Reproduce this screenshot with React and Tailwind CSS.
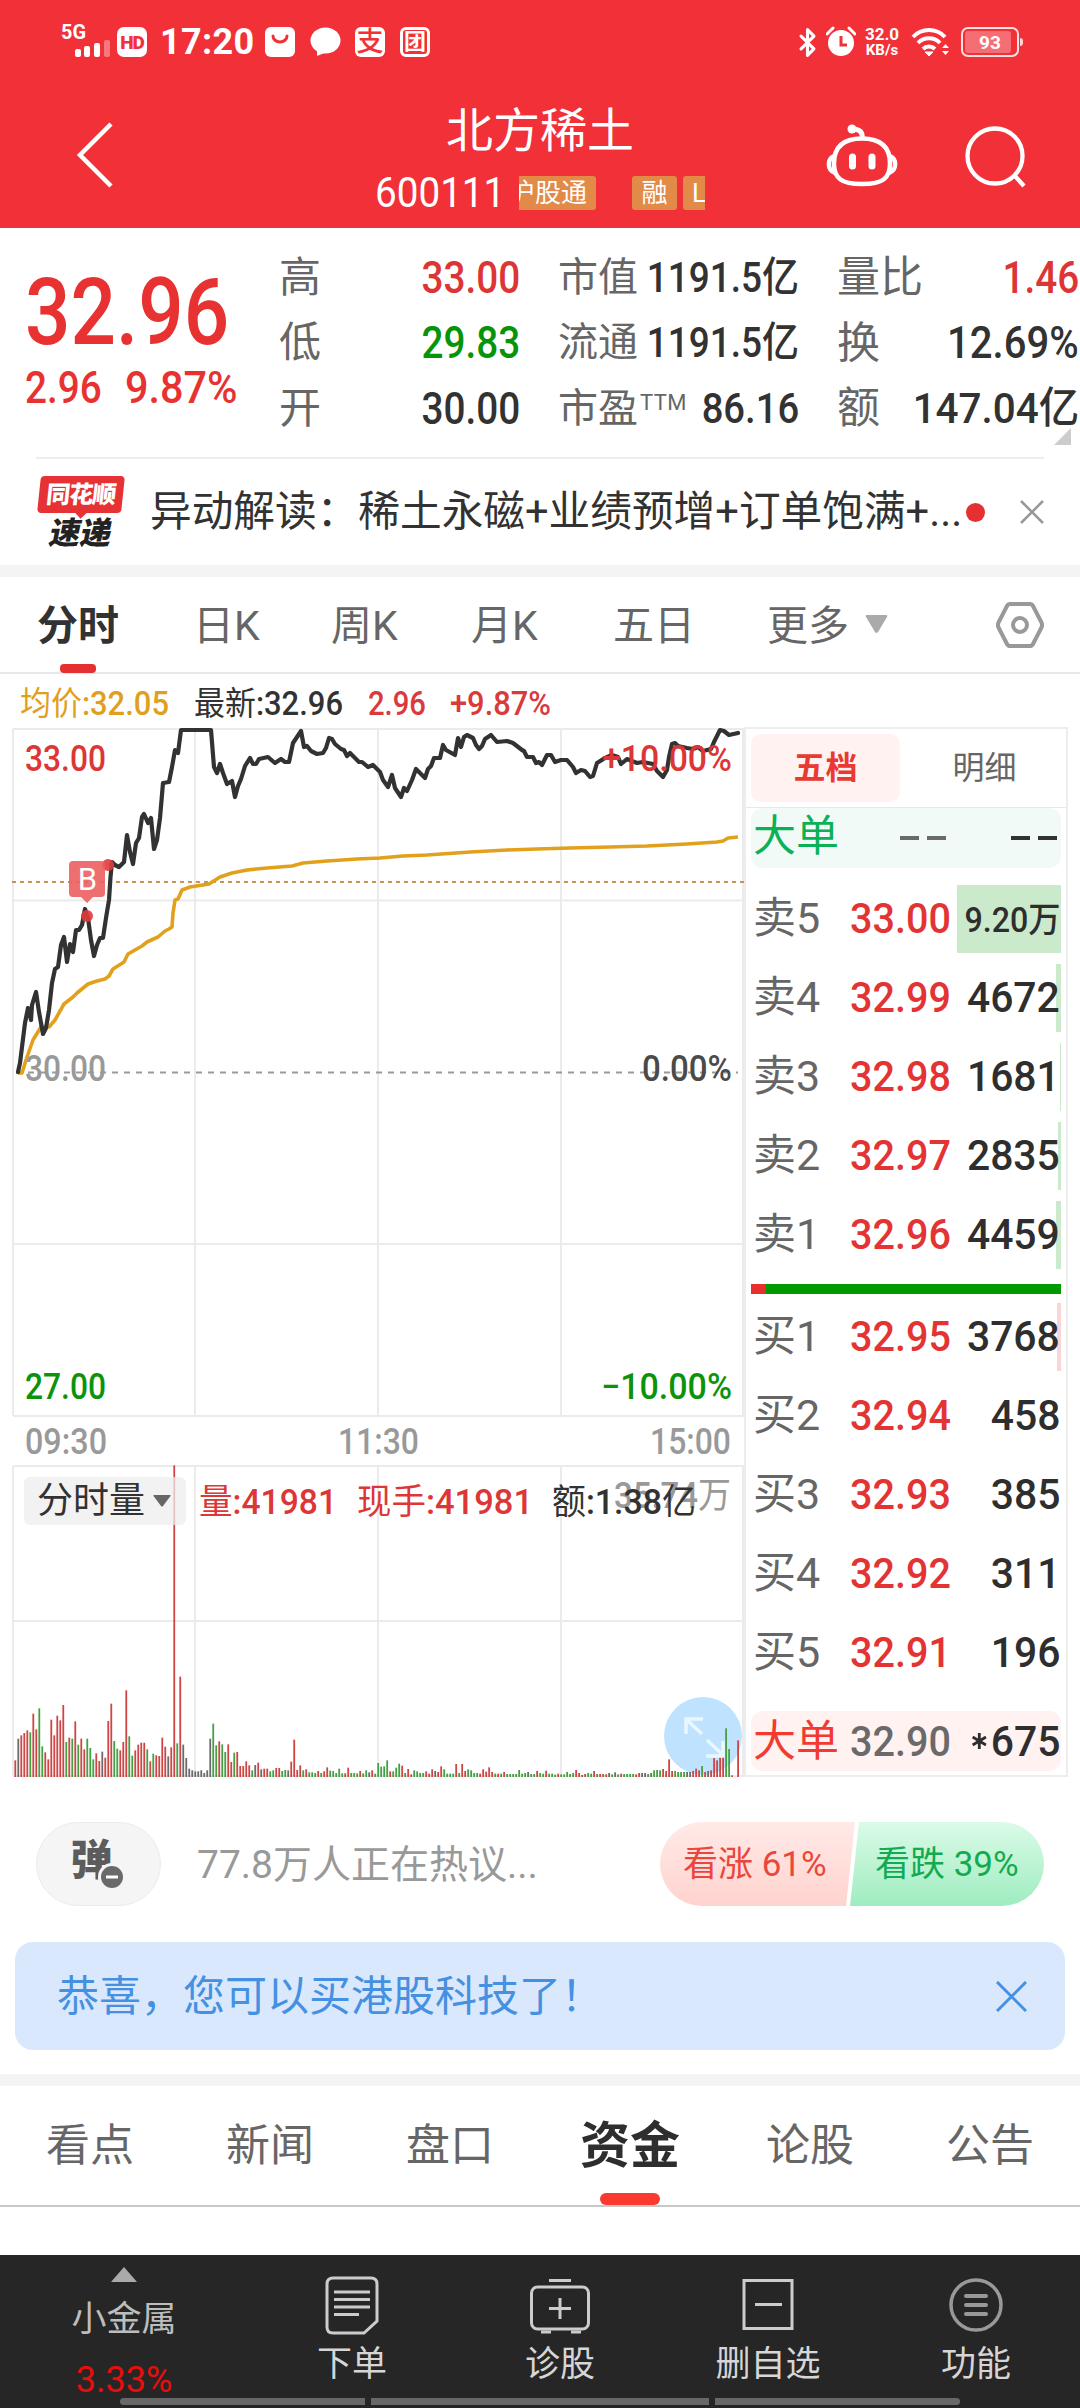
import React from 'react';
import { Bluetooth } from 'lucide-react';

const PRICE_LINE =
  '18,1072 20,1063 22,1047 25,1023 28,1008 31,1020 32,1005 36,992 39,1012 43,1034 46,1028 49,1010 52,983 55,969 58,967 61,945 64,937 67,962 70,944 73,952 76,930 79,930 82,925 85,909 88,918 91,940 94,956 97,945 100,938 103,938 106,918 109,900 110.5,877 112,862 115,865 119,867 124,862 127,835 130,852 133,864 136,843 139,838 142,817 144,814 148,823 151,818 154,849 157,840 160,818 163,783 169,782 172,767 175,750 178,753 181,730 211,730 214,767 217,773 220,764 223,773 227,784 232,781 235,797 238,786 241,779 245,766 250,758 253,764 256,764 259,759 268,757 275,763 281,759 285,762 289,762 293,743 301,731 304,747 307,746 311,751 317,754 323,753 326,748 329,738 332,739 335,744 341,749 344,750 347,756 350,753 359,762 362,762 368,767 373,765 380,772 383,780 388,787 392,775 395,788 401,797 404,788 407,791 412,780 416,769 420,773 425,778 428,769 431,766 434,758 440,758 443,745 446,750 455,755 458,738 461,747 464,737 467,735 473,738 476,745 479,749 482,746 485,739 491,735 497,742 507,741 513,743 522,750 524,751 527,757 533,757 536,763 539,762 542,765 547,755 551,755 555,762 561,760 567,760 573,767 576,773 581,770 585,771 590,777 593,776 597,763 605,758 612,755 618,757 621,764 627,759 637,763 643,762 653,764 657,771 663,777 667,770 669,757 672,744 675,743 678,746 687,748 693,749 698,747 703,751 711,749 714,742 720,730 724,731 729,735 738,733';

const AVG_LINE =
  '18,1073 22,1073 26,1060 33,1040 41,1027 49,1027 55,1020 64,1004 73,997 77,993 88,984 97,981 105,979 109,976 113,969 124,962 128,954 142,946 147,942 158,937 165,931 169,929 172,927 173,913 175,900 178,899 182,890 190,887 209,884 220,877 232,873 247,870 267,868 292,866 303,863 327,861 357,859 380,858 403,856 427,855 470,852 507,850 537,849 570,848 610,847 647,846 687,844 717,842 723,841 728,838 738,837';

// one entry per minute: r = up, g = down, k = flat, number = bar height in thirds of a pixel
const VOLUME =
  'r50 k115 r125 r132 r140 g134 r190 r143 g206 g92 r74 r53 r172 r125 r184 r170 r216 g105 r118 g115 r167 g97 r115 r83 g115 g87 g53 r71 r48 k76 r58 r168 r220 g108 g85 r80 r105 r260 g122 g64 r80 r97 r103 r103 g83 r47 g70 r65 r63 r118 r91 k62 r89 r935 g101 r301 k97 k57 k25 k20 k17 k17 k20 k12 k20 k115 g160 g95 r107 g98 g75 r98 r45 g73 r75 r33 r33 r47 r35 g20 k36 r43 k23 r25 r25 g17 g20 r27 r27 g18 g21 k20 r46 r112 r21 r35 g20 r23 g14 g14 g12 r18 g12 r17 r29 g19 g18 g12 g25 g11 r11 r28 g12 g12 g11 r18 g11 g20 k14 r20 g10 g42 g31 g32 g50 r17 g17 g28 g40 r34 g12 r24 r8 g20 g17 g12 g12 r17 r10 r23 k18 r15 r32 g23 g10 g10 g10 r39 g12 r39 r18 g23 g20 g12 g12 r10 r23 r16 r29 r15 g10 r10 g10 r15 g9 g9 g9 g9 g21 g10 g12 k15 g9 g9 r18 g12 g10 r19 g10 g10 g7 r10 g8 g8 g15 g9 g12 r21 r12 k6 r9 g12 g10 r18 g9 r9 r9 r8 k12 g8 k14 g8 r10 g9 g9 g9 g9 r8 r12 k12 k12 g9 k12 g20 g21 g20 r24 r18 r53 r18 g18 g15 g15 g15 k15 k15 r18 r25 r20 g33 r15 k18 r20 r57 r50 r60 r62 g146 g84 r5 k0 r110';

const BAR_COLORS = { r: '#cf4545', g: '#45a045', k: '#6b6b6b' };

const BARS = VOLUME.split(' ').map((item, i, all) => ({
  x: 14.4 + (i * 722.8) / (all.length - 1),
  h: Number(item.slice(1)) / 3,
  fill: BAR_COLORS[item[0]],
}));

const SELLS = [
  { label: '卖5', price: '33.00', qty: '9.20万', bar: 104 },
  { label: '卖4', price: '32.99', qty: '4672', bar: 5 },
  { label: '卖3', price: '32.98', qty: '1681', bar: 1 },
  { label: '卖2', price: '32.97', qty: '2835', bar: 3 },
  { label: '卖1', price: '32.96', qty: '4459', bar: 5 },
];

const BUYS = [
  { label: '买1', price: '32.95', qty: '3768', bar: 4 },
  { label: '买2', price: '32.94', qty: '458', bar: 0 },
  { label: '买3', price: '32.93', qty: '385', bar: 0 },
  { label: '买4', price: '32.92', qty: '311', bar: 0 },
  { label: '买5', price: '32.91', qty: '196', bar: 0 },
];

function StatusBar() {
  return (
    <div className="flex h-[84px] items-center pl-[61px] pr-[57px] text-white">
      <svg width="50" height="34" viewBox="0 0 50 34" fill="#fff" className="overflow-visible">
        <text x="0" y="14" fontSize="21" fontWeight="700" textLength="25" lengthAdjust="spacingAndGlyphs">5G</text>
        <rect x="14" y="24" width="6" height="8" rx="2" />
        <rect x="23" y="21" width="6" height="11" rx="2" />
        <rect x="33" y="18" width="6" height="14" rx="2" />
        <rect x="43" y="15" width="6" height="17" rx="2" opacity=".35" />
      </svg>
      <div className="ml-[6px] flex h-[30px] w-[30px] items-center justify-center rounded-[7px] bg-white text-[19px] font-black tracking-tighter text-[#f13038]">HD</div>
      <div className="ml-[13px] w-[93px] text-[36px] font-bold whitespace-nowrap tracking-[0.01em]">17:20</div>
      <svg className="ml-[12px]" width="30" height="30" viewBox="0 0 30 30">
        <rect width="30" height="30" rx="6" fill="#fff" />
        <path d="M8 9a7 6 0 0 0 14 0" fill="none" stroke="#f13038" strokeWidth="3" strokeLinecap="round" />
      </svg>
      <svg className="ml-[15px]" width="31" height="30" viewBox="0 0 31 30" fill="#fff">
        <ellipse cx="15.500" cy="13.500" rx="15" ry="13" />
        <path d="M7 22v7l10-4z" />
      </svg>
      <div className="ml-[14px] flex h-[30px] w-[30px] items-center justify-center rounded-[6px] bg-white text-[27px] font-medium text-[#f13038]">支</div>
      <div className="ml-[15px] flex h-[30px] w-[30px] items-center justify-center rounded-[6px] border-[3px] border-white text-[22px] font-bold">团</div>
      <div className="ml-auto flex items-center">
        <Bluetooth size={31} strokeWidth={2.4} className="mr-[3px]" />
        <svg width="30" height="32" viewBox="0 0 30 32">
          <circle cx="15" cy="17" r="13" fill="#fff" />
          <path d="M1 8l6-6M29 8l-6-6" stroke="#fff" strokeWidth="3" strokeLinecap="round" />
          <path d="M15 10v9h6" fill="none" stroke="#f13038" strokeWidth="3" />
        </svg>
        <div className="ml-[7px] flex w-[38px] flex-col items-center text-[17px] leading-[16px] font-bold">
          <span>32.0</span>
          <span className="whitespace-nowrap text-[15px]">KB/s</span>
        </div>
        <svg className="ml-[10px]" width="39" height="32" viewBox="0 0 39 32" fill="none" stroke="#fff" strokeWidth="4">
          <path d="M2 11a22 22 0 0 1 32 0M7 17a15 15 0 0 1 22 0M12 23a8.500 8.500 0 0 1 12 0" />
          <path d="M14 26l4 4 4-4z" fill="#fff" strokeWidth="1" />
          <path d="M31 22l3.500-4 3.500 4zM31 25l3.500 4 3.500-4z" fill="#fff" stroke="none" />
        </svg>
        <div className="ml-[11px] flex h-[30px] w-[58px] rounded-[7px] border-[2.5px] border-white/85 p-[2px]">
          <div className="flex w-[46px] items-center justify-center rounded-[3px] bg-white/30 pl-[4px] text-[19px] font-bold">93</div>
        </div>
        <div className="ml-px h-[8px] w-[3px] rounded-r bg-white/80" />
      </div>
    </div>
  );
}

function Header() {
  return (
    <header className="h-[228px] bg-[#f13038] text-white">
      <StatusBar />
      <div className="flex h-[144px]">
        <svg className="mt-[38px] ml-[76px]" width="38" height="66" viewBox="0 0 38 66" fill="none" stroke="#fff" strokeWidth="4.500">
          <path d="M35 2L4 33l31 31" />
        </svg>
        <div className="ml-[256px] flex w-[340px] flex-col items-center">
          <h1 className="mt-[23px] text-[47px] leading-[47px]">北方稀土</h1>
          <div className="mt-[17px] ml-[5px] flex h-[44px] items-center self-start text-[26px]">
            <span className="block w-[136px]">
              <span className="inline-block origin-left scale-x-[.92] text-[42px]">600111</span>
            </span>
            <div className="ml-[8px] flex h-[34px] w-[186px] overflow-hidden">
              <div className="flex w-[77px] shrink-0 items-center justify-end overflow-hidden rounded-r-[3px] bg-[#e28a48] pr-[9px] whitespace-nowrap">沪股通</div>
              <div className="ml-[36px] flex w-[45px] shrink-0 items-center justify-center rounded-[3px] bg-[#e28a48]">融</div>
              <div className="ml-[6px] flex w-[40px] shrink-0 items-center rounded-[3px] bg-[#e28a48] pl-[9px]">L</div>
            </div>
          </div>
        </div>
        <div className="ml-auto flex">
          <svg className="mt-[39px] mr-[66px]" width="72" height="66" viewBox="0 0 72 66" fill="none" stroke="#fff" strokeWidth="4.500">
            <path d="M36 15.500c19 0 28 9 28 25C64 55 57 61 36 61S8 55 8 40.500c0-16 9-25 28-25z" />
            <path d="M8 33c-7 3-7 14 1 17M64 33c7 3 7 14-1 17" />
            <path d="M36 16c1-6-1-9-8-10" strokeWidth="5" />
            <circle cx="26" cy="6" r="4.500" fill="#fff" stroke="none" />
            <path d="M26.500 34v9M46 34v9" strokeWidth="7" strokeLinecap="round" />
          </svg>
          <svg className="mt-[42px] mr-[53px]" width="63" height="63" viewBox="0 0 63 63" fill="none" stroke="#fff" strokeWidth="4.300">
            <circle cx="31" cy="30" r="27.500" />
            <path d="M50 49l10 11" />
          </svg>
        </div>
      </div>
    </header>
  );
}

function Stat({ label, sup, value, color = 'text-[#323232]', size = 'text-[44px]', scale = 'scale-x-[.88]' }) {
  return (
    <div className="flex h-[65.500px] items-center justify-between whitespace-nowrap">
      <div className="flex items-center text-[#666]">
        {label}
        {sup && <span className="-mt-3 ml-[2px] text-[22px] tracking-[.02em]">{sup}</span>}
      </div>
      <div className="flex w-0 justify-end">
        <span className={`inline-block shrink-0 origin-right font-medium ${scale} ${size} ${color}`}>{value}</span>
      </div>
    </div>
  );
}

function Quote() {
  return (
    <section className="relative flex h-[229px] pt-[17px]">
      <div className="w-[279px] pl-[25px] font-medium whitespace-nowrap text-[#e83232]">
        <div className="mt-[22px] origin-left scale-x-[.87] text-[92px] leading-[92px]">32.96</div>
        <div className="mt-[6px] flex text-[45px] leading-[45px]">
          <span className="w-[100px] origin-left scale-x-[.86]">2.96</span>
          <span className="origin-left scale-x-[.92]">9.87%</span>
        </div>
      </div>
      <div className="w-[241px] text-[42px]">
        <Stat label="高" value="33.00" color="text-[#dd3535]" />
        <Stat label="低" value="29.83" color="text-[#089408]" />
        <Stat label="开" value="30.00" />
      </div>
      <div className="ml-[38px] w-[241px] text-[40px]">
        <Stat label="市值" value="1191.5亿" size="text-[42px]" scale="scale-x-[.88]" />
        <Stat label="流通" value="1191.5亿" size="text-[42px]" scale="scale-x-[.88]" />
        <Stat label="市盈" sup="TTM" value="86.16" size="text-[42px]" scale="scale-x-[.91]" />
      </div>
      <div className="ml-[38px] w-[242px] text-[43px]">
        <Stat label="量比" value="1.46" color="text-[#dd3535]" />
        <Stat label="换" value="12.69%" scale="scale-x-[.91]" />
        <Stat label="额" value="147.04亿" size="text-[43px]" scale="scale-x-[.94]" />
      </div>
      <svg className="absolute right-[9px] bottom-[12px]" width="17" height="17">
        <path d="M17 0v17H0z" fill="#ccc" />
      </svg>
    </section>
  );
}

function News() {
  return (
    <section className="h-[108px] px-9">
      <div className="flex h-full items-center border-t-2 border-[#eee]">
        <div className="flex w-[90px] flex-col items-center font-black">
          <div className="relative flex h-[37px] w-[84px] -skew-x-6 items-center justify-center rounded-[4px] bg-[#e63235] text-[24px] tracking-[-1px] text-white">
            同花顺
            <div className="absolute -bottom-[4px] left-[40px] h-[8px] w-[8px] rotate-45 bg-[#e63235]" />
          </div>
          <div className="mt-[5px] -skew-x-12 text-[31px] leading-[31px] text-[#222]">速递</div>
        </div>
        <div className="ml-[24px] origin-left scale-x-[.992] text-[42px] whitespace-nowrap text-[#323232]">异动解读：稀土永磁+业绩预增+订单饱满+...</div>
        <div className="absolute ml-[930px] h-[19px] w-[19px] rounded-full bg-[#e63030]" />
        <svg className="ml-auto shrink-0" width="24" height="24" stroke="#999" strokeWidth="2.500">
          <path d="M1 1l22 22M23 1L1 23" />
        </svg>
      </div>
    </section>
  );
}

function ChartTabs() {
  return (
    <nav className="flex h-[97px] items-center border-b-2 border-[#e8e8e8] text-[41px] whitespace-nowrap text-[#666]">
      <div className="relative ml-[37px] w-[156px] pt-[4px] font-bold text-[#323232]">
        分时
        <div className="absolute top-[62px] left-[23px] h-[9px] w-[36px] rounded-[4px] bg-[#e63030]" />
      </div>
      <div className="w-[138px] pt-[4px]">日K</div>
      <div className="w-[140px] pt-[4px]">周K</div>
      <div className="w-[142px] pt-[4px]">月K</div>
      <div className="w-[154px] pt-[4px]">五日</div>
      <div className="pt-[4px]">更多</div>
      <svg className="ml-[16px]" width="23" height="19">
        <path d="M2 0h19q2 0 1 2l-9 15q-1.500 2-3 0L1 2Q0 0 2 0z" fill="#aaa" />
      </svg>
      <svg className="mr-[36px] ml-auto" width="48" height="48" viewBox="0 0 48 48" fill="none" stroke="#999" strokeWidth="4">
        <path d="M14 3h20q2 0 3 2l8.500 16.500q1.200 2.500 0 5L37 43q-1 2-3 2H14q-2 0-3-2L2.500 26.500q-1.200-2.500 0-5L11 5q1-2 3-2z" />
        <circle cx="24" cy="24" r="7" />
      </svg>
    </nav>
  );
}

function Legend() {
  return (
    <div className="h-[53px]">
      <svg width="560" height="53" fontSize="33" fontWeight="500" fill="#da3a3a">
        <text x="20" y="41" fill="#dfa01d" textLength="149" lengthAdjust="spacingAndGlyphs"><tspan fontWeight="400">均价</tspan>:32.05</text>
        <text x="194" y="41" fill="#323232" textLength="149" lengthAdjust="spacingAndGlyphs"><tspan fontWeight="400">最新</tspan>:32.96</text>
        <text x="368" y="41" textLength="58" lengthAdjust="spacingAndGlyphs">2.96</text>
        <text x="450" y="41" textLength="101" lengthAdjust="spacingAndGlyphs">+9.87%</text>
      </svg>
    </div>
  );
}

function MinuteChart() {
  return (
    <div className="relative h-[1052px] w-[744px] shrink-0">
      <svg width="744" height="1052" viewBox="0 727 744 1052" className="block">
        <g stroke="#ebebeb" strokeWidth="2" fill="none">
          <path d="M13 729h731M13 1416h731M13 1466h731M13 1776h731M13 900.500h731M13 1244h731M13 1621h731" />
          <path d="M13 729v687M195 729v687M378 729v687M561 729v687M743 729v687" />
          <path d="M13 1466v310M195 1466v310M378 1466v310M561 1466v310M743 1466v310" />
        </g>
        <path d="M12 882h732" stroke="#cb9256" strokeWidth="2" strokeDasharray="4 4" />
        <path d="M16 1072.500h722" stroke="#999" strokeWidth="2" strokeDasharray="6 6" />
        <polyline points={AVG_LINE} fill="none" stroke="#e2a11c" strokeWidth="3.600" strokeLinejoin="round" />
        <polyline points={PRICE_LINE} fill="none" stroke="#323232" strokeWidth="4.200" strokeLinejoin="round" strokeLinecap="round" />
        <circle cx="87" cy="916" r="6" fill="#e03a3a" opacity=".9" />
        <circle cx="108" cy="865" r="6" fill="#e03a3a" opacity=".9" />
        <path d="M73 861h28q4 0 4 4v28q0 4-4 4h-8l-6 6-6-6h-8q-4 0-4-4v-28q0-4 4-4z" fill="#ec5f5f" opacity=".9" />
        <text x="87.500" y="890" fontSize="31" fill="#fff" textAnchor="middle">B</text>

        <g fontSize="36" fontWeight="500">
          <text x="25" y="771" fill="#dc3636" textLength="81" lengthAdjust="spacingAndGlyphs">33.00</text>
          <text x="25" y="1081" fill="#999" textLength="81" lengthAdjust="spacingAndGlyphs">30.00</text>
          <text x="25" y="1399" fill="#0b940b" textLength="81" lengthAdjust="spacingAndGlyphs">27.00</text>
          <text x="602" y="771" fill="#dc3636" textLength="130" lengthAdjust="spacingAndGlyphs">+10.00%</text>
          <text x="642" y="1081" fill="#4a4a4a" textLength="90" lengthAdjust="spacingAndGlyphs">0.00%</text>
          <text x="601" y="1399" fill="#0b940b" textLength="131" lengthAdjust="spacingAndGlyphs">−10.00%</text>
          <g fill="#999">
            <text x="25" y="1454" textLength="82" lengthAdjust="spacingAndGlyphs">09:30</text>
            <text x="338" y="1454" textLength="81" lengthAdjust="spacingAndGlyphs">11:30</text>
            <text x="650" y="1454" textLength="81" lengthAdjust="spacingAndGlyphs">15:00</text>
            <text x="614" y="1508" textLength="117" lengthAdjust="spacingAndGlyphs">35.74<tspan fontWeight="400">万</tspan></text>
          </g>
          <g fontSize="35" fill="#dc3636">
            <text x="199" y="1514" textLength="138" lengthAdjust="spacingAndGlyphs"><tspan fontWeight="400">量</tspan>:41981</text>
            <text x="357" y="1514" textLength="176" lengthAdjust="spacingAndGlyphs"><tspan fontWeight="400">现手</tspan>:41981</text>
            <text x="552" y="1514" fill="#323232" textLength="144" lengthAdjust="spacingAndGlyphs"><tspan fontWeight="400">额</tspan>:1.38<tspan fontWeight="400">亿</tspan></text>
          </g>
        </g>

        <circle cx="703" cy="1736" r="39" fill="#bfe3ff" />
        {BARS.map((b, i) => (
          <rect key={i} x={b.x} y={1777 - b.h} width="1.800" height={b.h} fill={b.fill} />
        ))}
        <g fill="none" stroke="#e9f7ff" strokeWidth="3.500">
          <path d="M702 1734l-16-15M686 1734v-15h17" />
          <path d="M707 1740l16 15M723 1741v15h-17" />
        </g>
      </svg>
      <div className="absolute top-[750px] left-[24px] flex h-[48px] w-[162px] items-center rounded-[6px] bg-[#ededed]/75 pl-[13px] text-[36px] whitespace-nowrap text-[#323232]">
        分时量
        <svg className="ml-[8px]" width="18" height="12">
          <path d="M1 0h16q1 0 .5 1L10 11q-1 1-2 0L.5 1Q0 0 1 0z" fill="#666" />
        </svg>
      </div>
    </div>
  );
}

function OrderRow({ row, tint }) {
  const small = row.qty.includes('万');
  return (
    <div className="relative flex h-[79px] items-center pl-[2px] text-[43px] whitespace-nowrap">
      <div className="absolute top-[6px] right-0 h-[68px]" style={{ width: row.bar, background: tint }} />
      <div className="w-[97px] text-[#666]">{row.label}</div>
      <div className="w-[102px] origin-left scale-x-[.92] font-medium text-[#e33333]">{row.price}</div>
      <div className={`relative ml-auto origin-right pr-px font-medium text-[#2e2e2e] ${small ? 'scale-x-[.92] pt-[3px] text-[35px]' : 'scale-x-[.95]'}`}>{row.qty}</div>
    </div>
  );
}

function OrderBook() {
  return (
    <div className="h-[1050px] w-[324px] border-2 border-[#ededed] px-[5px]">
      <div className="flex h-[78px] items-center text-[32px]">
        <div className="flex h-[68px] w-[149px] items-center justify-center rounded-[10px] bg-[#fff2f1] font-bold text-[#e83a32]">五档</div>
        <div className="flex flex-1 items-center justify-center pl-[8px] text-[#666]">明细</div>
      </div>
      <div className="-mx-[5px] h-px bg-[#e8e8e8]" />
      <div className="flex h-[60px] items-center rounded-[12px] bg-[#f1faf6] pl-[2px] text-[43px] text-[#0cb157]">
        <span className="-mt-[4px]">大单</span>
        <div className="ml-[61px] flex gap-[8px]">
          <i className="h-[4px] w-[19px] bg-[#6a6a6a]" />
          <i className="h-[4px] w-[19px] bg-[#6a6a6a]" />
        </div>
        <div className="mr-[4px] ml-auto flex gap-[8px]">
          <i className="h-[4px] w-[19px] bg-[#323232]" />
          <i className="h-[4px] w-[19px] bg-[#323232]" />
        </div>
      </div>
      <div className="mt-[11px]">
        {SELLS.map((row) => <OrderRow key={row.label} row={row} tint="#cbe9cb" />)}
      </div>
      <div className="mt-[10px] flex h-[10px] bg-[#009a00]">
        <div className="w-[15px] bg-[#e63030]" />
      </div>
      <div className="mt-[3px]">
        {BUYS.map((row) => <OrderRow key={row.label} row={row} tint="#f6d6d6" />)}
      </div>
      <div className="mt-[19px] flex h-[60px] items-center rounded-[12px] bg-[#fff2f1] pl-[2px] text-[43px] whitespace-nowrap text-[#f23a30]">
        <div className="w-[97px]">大单</div>
        <div className="w-[102px] origin-left scale-x-[.92] font-medium text-[#6a6a6a]">32.90</div>
        <div className="ml-auto flex origin-right scale-x-[.95] items-center pr-px font-medium text-[#2e2e2e]">
          <svg className="mr-[4px]" width="16" height="16" stroke="#2e2e2e" strokeWidth="3">
            <path d="M8 0v16M1 4l14 8M15 4L1 12" />
          </svg>
          675
        </div>
      </div>
    </div>
  );
}

function Discussion() {
  return (
    <section className="flex h-[164px] items-center px-9 pt-[8px]">
      <div className="relative flex h-[84px] w-[125px] items-center justify-center rounded-full border border-[#ececec] bg-[#f5f5f5] text-[42px] font-black text-[#5c5c5c]">
        <span className="-mt-[6px] -ml-[14px] inline-block">弹</span>
        <svg className="absolute top-[40px] left-[61px]" width="28" height="28">
          <circle cx="14" cy="14" r="12.500" fill="#6a6a6a" stroke="#f5f5f5" strokeWidth="3" />
          <path d="M8 14h12" stroke="#fff" strokeWidth="3" />
        </svg>
      </div>
      <div className="ml-[36px] pt-[3px] text-[39px] text-[#999]">77.8万人正在热议...</div>
      <div className="ml-auto flex h-[84px] w-[384px] shrink-0 overflow-hidden rounded-full text-[35px] whitespace-nowrap">
        <div className="flex w-[195px] items-center bg-linear-to-b from-[#ffeae8] to-[#ffd3ce] pl-[23px] text-[#ea463c] [clip-path:polygon(0_0,100%_0,186px_100%,0_100%)]">看涨 61%</div>
        <div className="-ml-[5px] flex flex-1 items-center bg-linear-to-b from-[#dbfbe8] to-[#9eecc0] pl-[25px] text-[#12ab52] [clip-path:polygon(9px_0,100%_0,100%_100%,0_100%)]">看跌 39%</div>
      </div>
    </section>
  );
}

const TABS = ['看点', '新闻', '盘口', '资金', '论股', '公告'];

function ContentTabs() {
  return (
    <nav className="grid h-[121px] shrink-0 grid-cols-6 border-b-2 border-[#c8c8c8] text-[44px] text-[#666]">
      {TABS.map((tab) =>
        tab === '资金' ? (
          <div key={tab} className="relative flex items-center justify-center text-[50px] font-bold text-[#2e2e2e]">
            {tab}
            <div className="absolute bottom-0 h-[12px] w-[60px] rounded-[6px] bg-[#fa3a30]" />
          </div>
        ) : (
          <div key={tab} className="flex items-center justify-center">{tab}</div>
        )
      )}
    </nav>
  );
}

function NavItem({ label, children }) {
  return (
    <div className="flex w-[208px] flex-col items-center">
      <svg className="mt-[20px]" width="62" height="62" viewBox="0 0 62 62" fill="none" stroke="#ccc" strokeWidth="3">
        {children}
      </svg>
      <span className="mt-[10px] leading-[36px]">{label}</span>
    </div>
  );
}

function BottomNav() {
  return (
    <footer className="h-[153px] bg-[#262626] text-[35px] text-[#d6d6d6]">
      <div className="flex h-[143px]">
        <div className="flex w-[248px] flex-col items-center text-[#bdbdbd]">
          <svg className="mt-[12px]" width="26" height="15">
            <path d="M13 0l13 15H0z" fill="#aaa" />
          </svg>
          <span className="mt-[20px] leading-[36px]">小金属</span>
          <span className="mt-[24px] origin-center text-[36px] leading-[36px] text-[#e60f0b]">3.33%</span>
        </div>
        <NavItem label="下单">
          <path d="M12 3h38q6 0 6 6v37L43 58H12q-6 0-6-6V9q0-6 6-6z" />
          <path d="M13 17h36M13 24.500h36M13 32h36M13 39.500h25" />
        </NavItem>
        <NavItem label="诊股">
          <rect x="2.500" y="12" width="57" height="42" rx="6" />
          <path d="M20 5.500h22M31 23v21M20 33.500h22M12 57h10M42 57h10" />
        </NavItem>
        <NavItem label="删自选">
          <path d="M7 5.500h48v48H7zM18 29.500h27" />
        </NavItem>
        <NavItem label="功能">
          <circle cx="31" cy="30" r="25" stroke="#999" strokeWidth="3.500" />
          <path d="M21 21h20M21 30h20M21 39h20" stroke="#999" strokeWidth="4" strokeLinecap="round" />
        </NavItem>
      </div>
      <div className="ml-[120px] flex h-[7px] w-[840px] gap-[6px]">
        <div className="w-[245px] rounded-l-full bg-[#686868]" />
        <div className="flex-1 bg-[#686868]" />
        <div className="w-[245px] rounded-r-full bg-[#686868]" />
      </div>
    </footer>
  );
}

export default function App() {
  return (
    <div className="flex h-[2408px] w-[1080px] flex-col overflow-hidden bg-white font-[Roboto,'Noto_Sans_CJK_SC',sans-serif] leading-none">
      <Header />
      <Quote />
      <News />
      <div className="h-[12px] shrink-0 bg-[#f4f4f4]" />
      <ChartTabs />
      <Legend />
      <div className="flex h-[1051px] shrink-0">
        <MinuteChart />
        <OrderBook />
      </div>
      <Discussion />
      <div className="mx-[15px] flex h-[108px] shrink-0 items-center rounded-[18px] bg-[#d9e8fc] pr-[38px] pl-[42px] text-[42px] text-[#4690e2]">
        <span className="pt-[2px]">恭喜，您可以买港股科技了！</span>
        <svg className="ml-auto" width="31" height="31" stroke="#4690e2" strokeWidth="3">
          <path d="M1 1l29 29M30 1L1 30" />
        </svg>
      </div>
      <div className="mt-[24px] h-[12px] shrink-0 bg-[#f4f4f4]" />
      <ContentTabs />
      <div className="mt-auto">
        <BottomNav />
      </div>
    </div>
  );
}
